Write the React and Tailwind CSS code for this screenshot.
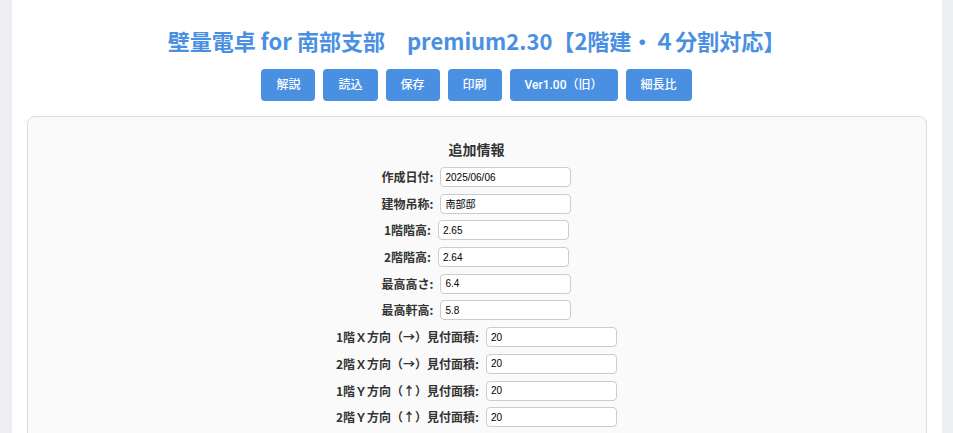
import React from 'react';

const BUTTONS = ['解説', '読込', '保存', '印刷', 'Ver1.00（旧）', '細長比'];

const FIELDS = [
  { label: '作成日付:', value: '2025/06/06' },
  { label: '建物吊称:', value: '南部邸' },
  { label: '1階階高:', value: '2.65' },
  { label: '2階階高:', value: '2.64' },
  { label: '最高高さ:', value: '6.4' },
  { label: '最高軒高:', value: '5.8' },
  { label: '1階Ｘ方向（→）見付面積:', value: '20' },
  { label: '2階Ｘ方向（→）見付面積:', value: '20' },
  { label: '1階Ｙ方向（↑）見付面積:', value: '20' },
  { label: '2階Ｙ方向（↑）見付面積:', value: '20' },
];

const jp = "font-['Noto_Sans_CJK_JP',sans-serif]";

function FieldRow({ label, value }) {
  return (
    <div className="flex items-center justify-center gap-[7px] h-[20px]">
      <label className={`${jp} text-[12px] font-bold text-[#333] leading-none`}>{label}</label>
      <input
        type="text"
        defaultValue={value}
        className="w-[131px] h-[20px] border border-[#ccc] rounded-[4px] bg-white px-[4px] text-[10px] text-black font-['Liberation_Sans','Noto_Sans_CJK_JP',sans-serif] outline-none"
      />
    </div>
  );
}

export default function App() {
  return (
    <div className="min-h-screen bg-[#eceef2]">
      <div className="w-[930px] mx-auto bg-white min-h-[433px] px-[15px] pt-[22px]">
        {/* Header */}
        <h1 className={`${jp} text-center text-[22px] font-bold text-[#4a90e2] leading-[36px]`}>
          壁量電卓 for 南部支部　premium2.30【2階建・４分割対応】
        </h1>
        <div className="flex justify-center gap-[8px] mt-[11px]">
          {BUTTONS.map((b) => (
            <button
              key={b}
              className="h-[32px] px-[15px] rounded-[4px] bg-[#4a90e2] text-white text-[12px] font-medium font-['Roboto','Noto_Sans_CJK_JP',sans-serif]"
            >
              {b}
            </button>
          ))}
        </div>

        {/* 追加情報 */}
        <div className="mt-[15px] border border-[#ddd] rounded-[8px] bg-[#fafafa] pt-[20px] pb-[20px]">
          <h3 className={`${jp} text-center text-[14px] font-bold text-[#333] leading-[24px]`}>追加情報</h3>
          <div className="flex flex-col gap-[6.7px] mt-[6px]">
            {FIELDS.map((f) => (
              <FieldRow key={f.label} {...f} />
            ))}
          </div>
        </div>
      </div>
    </div>
  );
}
